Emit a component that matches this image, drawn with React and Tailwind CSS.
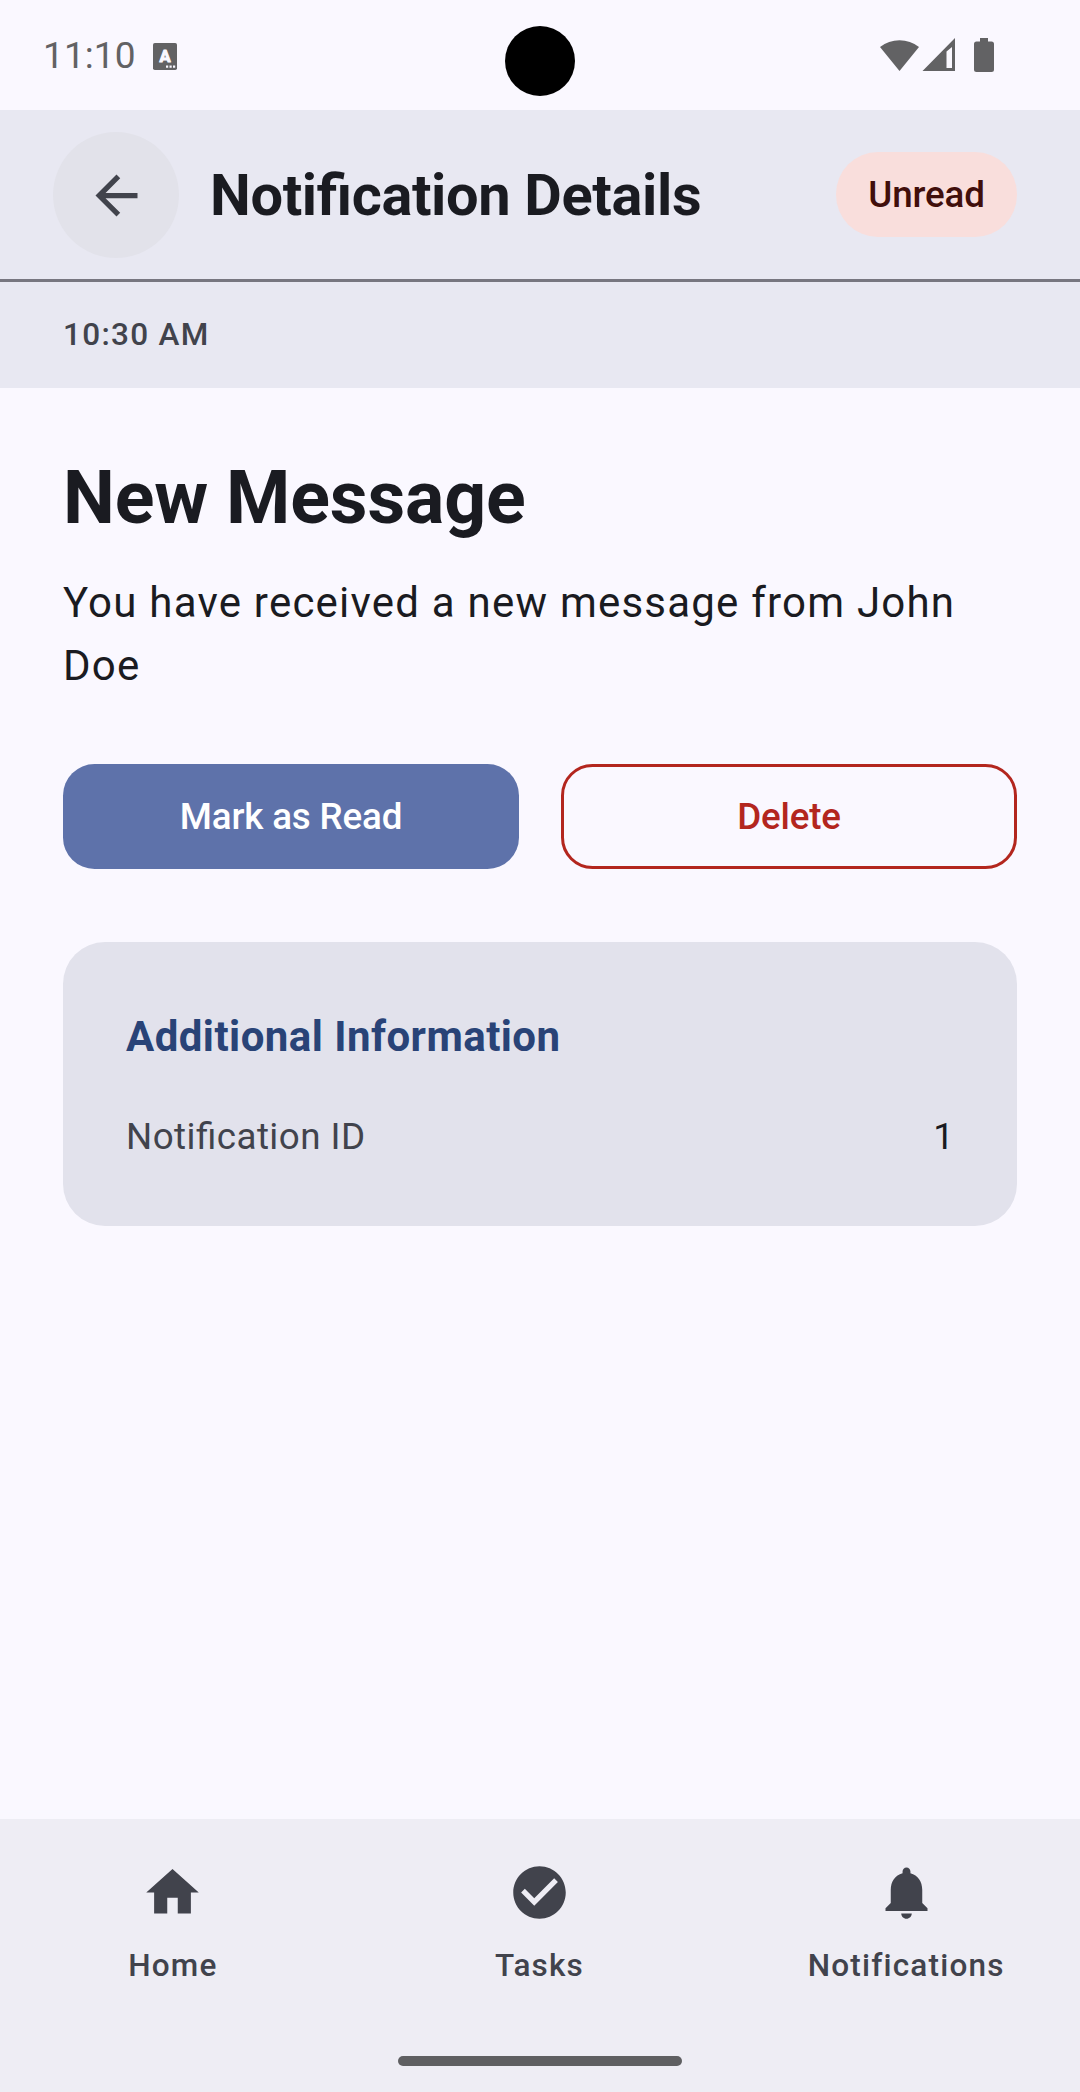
const icons = {
  back: "M20 11H7.83l5.59-5.59L12 4l-8 8 8 8 1.41-1.41L7.83 13H20v-2z",
  home: "M10 20v-6h4v6h5v-8h3L12 3 2 12h3v8z",
  tasks:
    "M12 2C6.48 2 2 6.48 2 12s4.48 10 10 10 10-4.48 10-10S17.52 2 12 2zm-2 15l-5-5 1.41-1.41L10 14.17l7.59-7.59L19 8l-9 9z",
  bell: "M12 22c1.1 0 2-.9 2-2h-4c0 1.1.89 2 2 2zm6-6v-5c0-3.07-1.64-5.64-4.5-6.32V4c0-.83-.67-1.5-1.5-1.5s-1.5.67-1.5 1.5v.68C7.63 5.36 6 7.92 6 11v5l-2 2v1h16v-1l-2-2z",
};

function Icon({ name }) {
  return (
    <svg viewBox="0 0 24 24" className="size-[63px]" fill="currentColor" aria-hidden="true">
      <path d={icons[name]} />
    </svg>
  );
}

function StatusBar() {
  return (
    <div className="relative flex h-[110px] shrink-0 items-start justify-between pr-[86px] pl-[43px] text-[#626264]">
      <div className="flex pt-[34px]">
        <span className="w-[110px] text-[37px] leading-[43px] tracking-[0.1px] whitespace-nowrap">11:10</span>
        <svg viewBox="0 0 24 27" className="mt-[8.5px] h-[27px] w-[24px]" aria-hidden="true">
          <rect width="24" height="27" rx="1.8" fill="currentColor" />
          <text
            x="12"
            y="19"
            textAnchor="middle"
            fill="#faf8ff"
            stroke="#faf8ff"
            strokeWidth="1"
            strokeLinejoin="round"
            className="text-[16.5px] font-bold"
          >
            A
          </text>
          <path d="M13 22.5h2.2v2.2H13zM16.5 22.5h2.2v2.2h-2.2zM20 22.5h2.2v2.2H20z" fill="#faf8ff" />
        </svg>
      </div>
      <svg viewBox="0 0 114 34" className="mt-[38px] h-[34px] w-[114px]" fill="currentColor" aria-hidden="true">
        <path d="M0 9A31.5 31.5 0 0 1 39 9L19.5 33z" />
        <path fillRule="evenodd" d="M42.5 33 75 0v33zM66.5 13.5V30H72V9z" />
        <path d="M100 0h8v3.5h3.5a2.5 2.5 0 0 1 2.5 2.5v25.5a2.5 2.5 0 0 1-2.5 2.5h-15a2.5 2.5 0 0 1-2.5-2.5V6a2.5 2.5 0 0 1 2.5-2.5h3.5z" />
      </svg>
      <div className="absolute top-[26px] left-[505px] size-[70px] rounded-full bg-black" />
    </div>
  );
}

function NavItem({ icon, label }) {
  return (
    <button className="flex flex-1 flex-col items-center gap-[21px] text-[#41434c]">
      <Icon name={icon} />
      <span className="text-[31.5px] leading-[42px] font-medium tracking-[1.18px]">{label}</span>
    </button>
  );
}

export default function App() {
  return (
    <div className="flex h-[2092px] w-[1080px] flex-col overflow-hidden bg-[#faf8ff] font-['Roboto',sans-serif] text-[#1a1b21]">
      <StatusBar />

      <header className="flex h-[172px] shrink-0 items-center border-b-[3px] border-[#777680] bg-[#e8e8f2] pt-px pr-[63px] pl-[53px]">
        <button className="flex size-[126px] items-center justify-center rounded-full bg-[#e2e2ea] text-[#41434c]">
          <Icon name="back" />
        </button>
        <h1 className="ml-[31px] flex-1 text-[57.75px] leading-[74px] font-bold tracking-[-0.35px] whitespace-nowrap [font-feature-settings:'liga']">
          Notification Details
        </h1>
        <span className="mb-[2px] flex h-[85px] w-[181px] items-center justify-center rounded-[42px] bg-[#f9dedc] pt-[2px] text-[36.75px] font-medium tracking-[-0.15px] text-[#410e0b]">
          Unread
        </span>
      </header>

      <div className="flex h-[106px] shrink-0 items-center bg-[#e8e8f2] px-[63px] text-[31.5px] font-medium tracking-[1.31px] text-[#41434c]">
        10:30 AM
      </div>

      <main className="flex flex-1 flex-col px-[63px] pt-[63px]">
        <h2 className="text-[73.5px] leading-[94px] font-bold tracking-[-0.17px]">New Message</h2>
        <p className="mt-[26px] text-[42px] leading-[63px] tracking-[1.22px]">
          You have received a new message from John Doe
        </p>
        <div className="mt-[67px] grid h-[105px] grid-cols-2 gap-[42px] text-[36.75px] font-medium tracking-[-0.17px]">
          <button className="rounded-[31.5px] bg-[#5e72aa] text-white">Mark as Read</button>
          <button className="rounded-[31.5px] border-[3px] border-[#b3261e] text-[#b3261e]">Delete</button>
        </div>
        <section className="mt-[73px] flex h-[284px] flex-col gap-[42px] rounded-[42px] bg-[#e2e2ec] p-[63px]">
          <h3 className="text-[42px] leading-[63px] font-bold tracking-[0.45px] text-[#294377]">
            Additional Information
          </h3>
          <div className="flex justify-between text-[36.75px] leading-[53px]">
            <span className="tracking-[0.45px] text-[#41434c] [font-feature-settings:'liga']">Notification ID</span>
            <span>1</span>
          </div>
        </section>
      </main>

      <nav className="flex h-[273px] shrink-0 flex-col justify-between bg-[#eeedf4] pt-[42px] pb-[26px]">
        <div className="mr-px flex gap-[21px]">
          <NavItem icon="home" label="Home" />
          <NavItem icon="tasks" label="Tasks" />
          <NavItem icon="bell" label="Notifications" />
        </div>
        <div className="mx-auto h-[10px] w-[284px] rounded-full bg-[#5f5f61]" />
      </nav>
    </div>
  );
}
